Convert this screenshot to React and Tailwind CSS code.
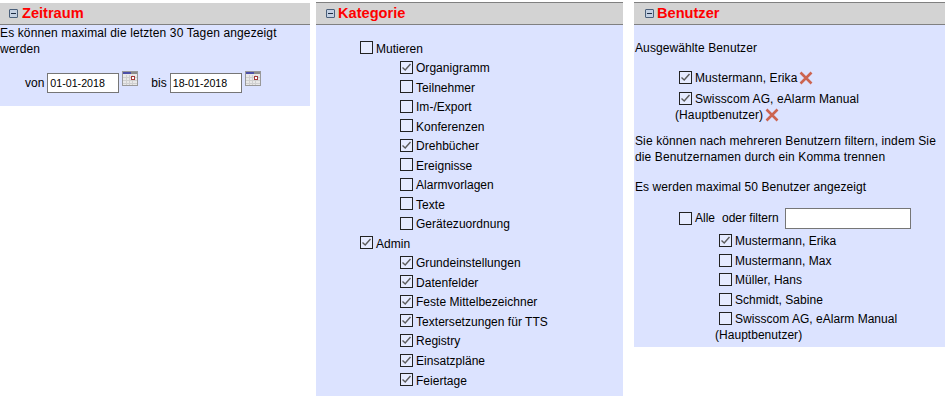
const font = { fontFamily: '"Liberation Sans", Arial, sans-serif' };

function Box({ checked, className = "" }) {
  return (
    <span className={`inline-block align-[-2px] w-[13px] h-[13px] border border-[#222222] bg-[#e6ebff] ${className}`}>
      {checked && (
        <svg viewBox="0 0 11 11" className="block w-[11px] h-[11px]" fill="none">
          <path d="M1.5 5.5 L4.2 8 L9.5 2" stroke="#5c5c5c" strokeWidth="1.4" />
        </svg>
      )}
    </span>
  );
}

function Minus() {
  return (
    <span className="inline-flex items-center justify-center w-[9px] h-[9px] border border-[#4a5f7a] rounded-[1px] bg-[#c3d0e2]">
      <span className="block w-[5px] h-px bg-[#1c2c44]" />
    </span>
  );
}

function Header({ title, pad, gap }) {
  return (
    <div className={`flex items-center h-[22px] bg-[#d3d3d3] border-b border-[#808080] ${gap} ${pad}`}>
      <Minus />
      <span className="text-[14.6px] font-bold text-[#ff0000] leading-none">{title}</span>
    </div>
  );
}

function Cal() {
  return (
    <svg viewBox="0 0 16 15" className="block w-4 h-[15px]">
      <rect x="0.5" y="0.5" width="15" height="14" fill="#e8e8e8" stroke="#999999" />
      <rect x="1" y="1" width="8" height="2" fill="#4c4fa8" />
      <rect x="9" y="1" width="6" height="2" fill="#8a8a8a" />
      <path d="M1 6.5H15M1 9.5H15M1 12.5H15M4.5 4V14M7.5 4V14M10.5 4V14" stroke="#cfcfcf" />
      <rect x="9.5" y="5.5" width="3" height="3" fill="#ffffff" stroke="#a33a3a" />
    </svg>
  );
}

function DateInput({ value }) {
  return (
    <input
      readOnly
      value={value}
      className="w-[72px] h-[20px] px-[2px] bg-white border border-[#767676] text-[10.67px] text-black outline-none"
      style={font}
    />
  );
}

function Remove() {
  return (
    <svg viewBox="0 0 14 14" className="inline-block w-[14px] h-[14px] align-[-3px] ml-[1.5px]">
      <path d="M1.5 1.5 L12.5 12.5 M12.5 1.5 L1.5 12.5" stroke="#cc6450" strokeWidth="2.6" />
    </svg>
  );
}

const mutieren = [
  ["Organigramm", true],
  ["Teilnehmer", false],
  ["Im-/Export", false],
  ["Konferenzen", false],
  ["Drehbücher", true],
  ["Ereignisse", false],
  ["Alarmvorlagen", false],
  ["Texte", false],
  ["Gerätezuordnung", false],
];
const admin = [
  "Grundeinstellungen",
  "Datenfelder",
  "Feste Mittelbezeichner",
  "Textersetzungen für TTS",
  "Registry",
  "Einsatzpläne",
  "Feiertage",
];
const users = [
  ["Mustermann, Erika", true],
  ["Mustermann, Max", false],
  ["Müller, Hans", false],
  ["Schmidt, Sabine", false],
  ["Swisscom AG, eAlarm Manual (Hauptbenutzer)", false],
];

function CatRow({ label, checked, sub }) {
  return (
    <div className={`flex items-center gap-[3px] h-[19.53px] tracking-[0.03px] ${sub ? "pl-[84px]" : "pl-[44px]"}`}>
      <Box checked={checked} className="-translate-y-px" />
      <span>{label}</span>
    </div>
  );
}

export default function App() {
  return (
    <div className="flex items-start w-[950px] h-[402px] overflow-hidden bg-white text-[12px] leading-[16px] text-black" style={font}>
      <section className="w-[310px] mt-[3px] bg-[#dce3ff] pb-[13px]">
        <Header title="Zeitraum" pad="pl-[9px]" gap="gap-[4px]" />
        <p className="m-0 tracking-[0.125px]">Es können maximal die letzten 30 Tagen angezeigt werden</p>
        <div className="flex items-center mt-[16px] pl-[25px]">
          <span className="mr-[3px]">von</span>
          <DateInput value="01-01-2018" />
          <span className="ml-[3px] self-start -mt-[2px]"><Cal /></span>
          <span className="ml-[13px] mr-[3px]">bis</span>
          <DateInput value="18-01-2018" />
          <span className="ml-[3px] self-start -mt-[2px]"><Cal /></span>
        </div>
      </section>

      <section className="w-[307px] ml-[6px] mt-[2px] bg-[#dce3ff] pb-[6px]">
        <div className="border-t border-[#808080]">
          <Header title="Kategorie" pad="pl-[10px]" gap="gap-[3px]" />
        </div>
        <div className="pt-[14px]">
          <CatRow label="Mutieren" />
          {mutieren.map(([l, c]) => <CatRow key={l} label={l} checked={c} sub />)}
          <CatRow label="Admin" checked />
          {admin.map((l) => <CatRow key={l} label={l} checked sub />)}
        </div>
      </section>

      <section className="w-[311px] ml-[11px] mt-[2px] bg-[#dce3ff] pb-[4px]">
        <div className="border-t border-[#808080]">
          <Header title="Benutzer" pad="pl-[11px]" gap="gap-[3px]" />
        </div>
        <div className="pt-[15px] pl-px">
          <p className="m-0 tracking-[0.1px]">Ausgewählte Benutzer</p>
          <div className="mt-[14px] pl-[40px] tracking-[0.1px]">
            <div>
              <Box checked className="ml-[4px] mr-[3px]" />Mustermann, Erika<Remove />
            </div>
            <div className="mt-[5px]">
              <Box checked className="ml-[4px] mr-[3px]" />Swisscom AG, eAlarm Manual (Hauptbenutzer)<Remove />
            </div>
          </div>
          <p className="m-0 mt-[10px] tracking-[0.115px]">Sie können nach mehreren Benutzern filtern, indem Sie die Benutzernamen durch ein Komma trennen</p>
          <p className="m-0 mt-[14px] tracking-[0.08px]">Es werden maximal 50 Benutzer angezeigt</p>
          <div className="flex items-start mt-[13px] pl-[44px]">
            <Box className="mt-[4px] mr-[3px]" />
            <span className="mt-[2px]">Alle</span>
            <span className="mt-[2px] ml-[7px] mr-[6px]">oder filtern</span>
            <input readOnly className="w-[126px] h-[21px] bg-white border border-[#767676] outline-none" />
          </div>
          <div className="mt-[4px] pl-[80px] tracking-[0.03px]">
            {users.map(([l, c]) => (
              <div key={l} className="mb-[3.6px] last:mb-0">
                <Box checked={c} className="ml-[4px] mr-[3px]" />{l}
              </div>
            ))}
          </div>
        </div>
      </section>
    </div>
  );
}
